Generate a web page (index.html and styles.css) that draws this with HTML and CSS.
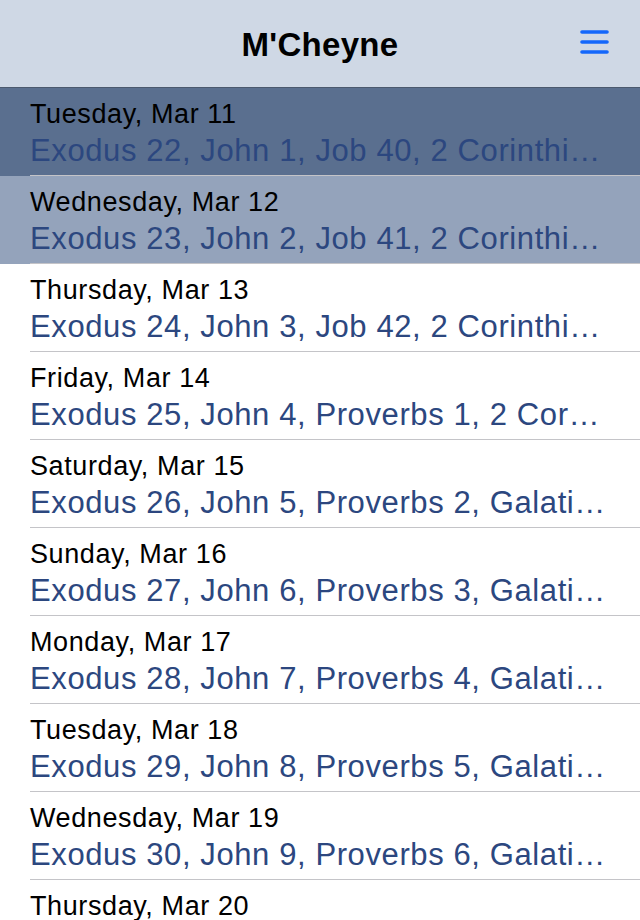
FILE: index.html
```html
<!DOCTYPE html>
<html lang="en">
<head>
    <meta charset="UTF-8">
    <meta name="viewport" content="width=device-width, initial-scale=1.0">
    <title>M'Cheyne</title>
    <link rel="stylesheet" href="styles.css">
</head>
<body>

    <div class="navbar">
        <h1 class="title">M'Cheyne</h1>
        <button class="menu-btn" aria-label="Menu">
            <svg width="30" height="26" viewBox="0 0 30 26">
                <g stroke="#1467fb" stroke-width="3.6" stroke-linecap="round">
                    <line x1="2" y1="3" x2="27" y2="3"/>
                    <line x1="2" y1="13" x2="27" y2="13"/>
                    <line x1="2" y1="23" x2="27" y2="23"/>
                </g>
            </svg>
        </button>
    </div>

    <ul class="day-list">
        <li class="day current">
            <div class="date">Tuesday, Mar 11</div>
            <div class="reading">Exodus 22, John 1, Job 40, 2 Corinthians 5</div>
        </li>
        <li class="day selected">
            <div class="date">Wednesday, Mar 12</div>
            <div class="reading">Exodus 23, John 2, Job 41, 2 Corinthians 6</div>
        </li>
        <li class="day">
            <div class="date">Thursday, Mar 13</div>
            <div class="reading">Exodus 24, John 3, Job 42, 2 Corinthians 7</div>
        </li>
        <li class="day">
            <div class="date">Friday, Mar 14</div>
            <div class="reading">Exodus 25, John 4, Proverbs 1, 2 Corinthians 8</div>
        </li>
        <li class="day">
            <div class="date">Saturday, Mar 15</div>
            <div class="reading">Exodus 26, John 5, Proverbs 2, Galatians 1</div>
        </li>
        <li class="day">
            <div class="date">Sunday, Mar 16</div>
            <div class="reading">Exodus 27, John 6, Proverbs 3, Galatians 2</div>
        </li>
        <li class="day">
            <div class="date">Monday, Mar 17</div>
            <div class="reading">Exodus 28, John 7, Proverbs 4, Galatians 3</div>
        </li>
        <li class="day">
            <div class="date">Tuesday, Mar 18</div>
            <div class="reading">Exodus 29, John 8, Proverbs 5, Galatians 4</div>
        </li>
        <li class="day">
            <div class="date">Wednesday, Mar 19</div>
            <div class="reading">Exodus 30, John 9, Proverbs 6, Galatians 5</div>
        </li>
        <li class="day last">
            <div class="date">Thursday, Mar 20</div>
        </li>
    </ul>

</body>
</html>
```

FILE: styles.css
```css
body {
    font-family: "Liberation Sans", Arial, sans-serif;
    background-color: #ffffff;
    margin: 0;
    padding: 0;
    height: 920px;
    overflow: hidden;
}
.navbar {
    height: 87px;
    background-color: #cfd8e5;
    border-bottom: 1px solid #4b596e;
    display: flex;
    align-items: center;
    justify-content: center;
    position: relative;
}
.title {
    margin: 0;
    font-size: 33px;
    font-weight: bold;
    letter-spacing: 0.3px;
    color: #000;
    padding-top: 2px;
}
.menu-btn {
    position: absolute;
    right: 30px;
    top: 29px;
    background: none;
    border: none;
    padding: 0;
    cursor: pointer;
}
.menu-btn svg {
    display: block;
}
.day-list {
    list-style: none;
    margin: 0;
    padding: 0;
}
.day {
    height: 88px;
    box-sizing: border-box;
    padding: 11px 34px 0 30px;
    position: relative;
}
.day::after {
    content: "";
    position: absolute;
    left: 30px;
    right: 0;
    bottom: 0;
    height: 1px;
    background-color: #c4c4c8;
}
.day.current {
    background-color: #5a6f8f;
}
.day.selected {
    background-color: #94a3bb;
}
.day.last {
    height: 40px;
}
.day.last::after {
    display: none;
}
.date {
    font-size: 27px;
    line-height: 30px;
    letter-spacing: 0.6px;
    color: #000;
    white-space: nowrap;
}
.reading {
    margin-top: 4px;
    font-size: 31px;
    line-height: 36px;
    letter-spacing: 0.6px;
    color: #2c477f;
    white-space: nowrap;
    overflow: hidden;
    text-overflow: ellipsis;
}
```
